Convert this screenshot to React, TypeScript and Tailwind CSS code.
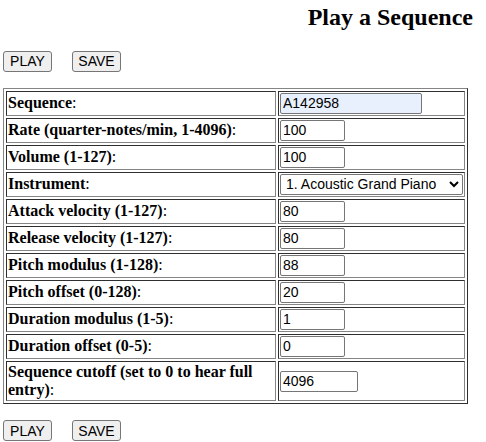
const rows: { label: string; value?: string; width?: string; select?: boolean; filled?: boolean }[] = [
  { label: 'Sequence', value: 'A142958', width: 'w-[142px]', filled: true },
  { label: 'Rate (quarter-notes/min, 1-4096)', value: '100' },
  { label: 'Volume (1-127)', value: '100' },
  { label: 'Instrument', select: true },
  { label: 'Attack velocity (1-127)', value: '80' },
  { label: 'Release velocity (1-127)', value: '80' },
  { label: 'Pitch modulus (1-128)', value: '88' },
  { label: 'Pitch offset (0-128)', value: '20' },
  { label: 'Duration modulus (1-5)', value: '1' },
  { label: 'Duration offset (0-5)', value: '0' },
  { label: 'Sequence cutoff (set to 0 to hear full entry)', value: '4096', width: 'w-[78px]' },
];

const cell = 'border border-t-[#2f2f2f] border-l-[#2f2f2f] border-r-[#858585] border-b-[#858585] p-[1px] align-middle';

const Buttons = () => (
  <div className="flex gap-[20px] font-['Liberation_Sans',Arial,sans-serif] text-[14px]">
    <button className="h-[21px] w-[49px] bg-[#efefef] border border-[#767676] rounded-[3px] text-black leading-none">PLAY</button>
    <button className="h-[21px] w-[49px] bg-[#efefef] border border-[#767676] rounded-[3px] text-black leading-none">SAVE</button>
  </div>
);

export default function App() {
  return (
    <div className="pl-[3px] pt-[4px] bg-white min-h-[442px] text-black font-['Liberation_Serif','Times_New_Roman',serif]">
      <h2 className="text-right pr-[13px] text-[24px] font-bold leading-[26.6px]">Play a Sequence</h2>
      <div className="mt-[20px]">
        <Buttons />
      </div>
      <table className="mt-[16px] w-[465px] border-separate border-spacing-[2px] border border-t-[#858585] border-l-[#858585] border-r-[#2f2f2f] border-b-[#2f2f2f]">
        <tbody>
          {rows.map((r) => (
            <tr key={r.label}>
              <td className={`${cell} text-[16px] leading-[18.4px]`}>
                <b>{r.label}</b>:
              </td>
              <td className={`${cell} w-[187px]`}>
                {r.select ? (
                  <select
                    defaultValue="1"
                    className="block w-[183px] h-[21px] border border-[#767676] rounded-[2px] bg-white text-[14px] font-['Liberation_Sans',Arial,sans-serif] pl-[1px]"
                  >
                    <option value="1">1. Acoustic Grand Piano</option>
                  </select>
                ) : (
                  <input
                    defaultValue={r.value}
                    className={`block h-[21px] ${r.width ?? 'w-[65px]'} border border-[#767676] rounded-[2px] px-[2px] text-[14px] font-['Liberation_Sans',Arial,sans-serif] ${r.filled ? 'bg-[#e8f0fe]' : 'bg-white'}`}
                  />
                )}
              </td>
            </tr>
          ))}
        </tbody>
      </table>
      <div className="mt-[16px]">
        <Buttons />
      </div>
    </div>
  );
}
